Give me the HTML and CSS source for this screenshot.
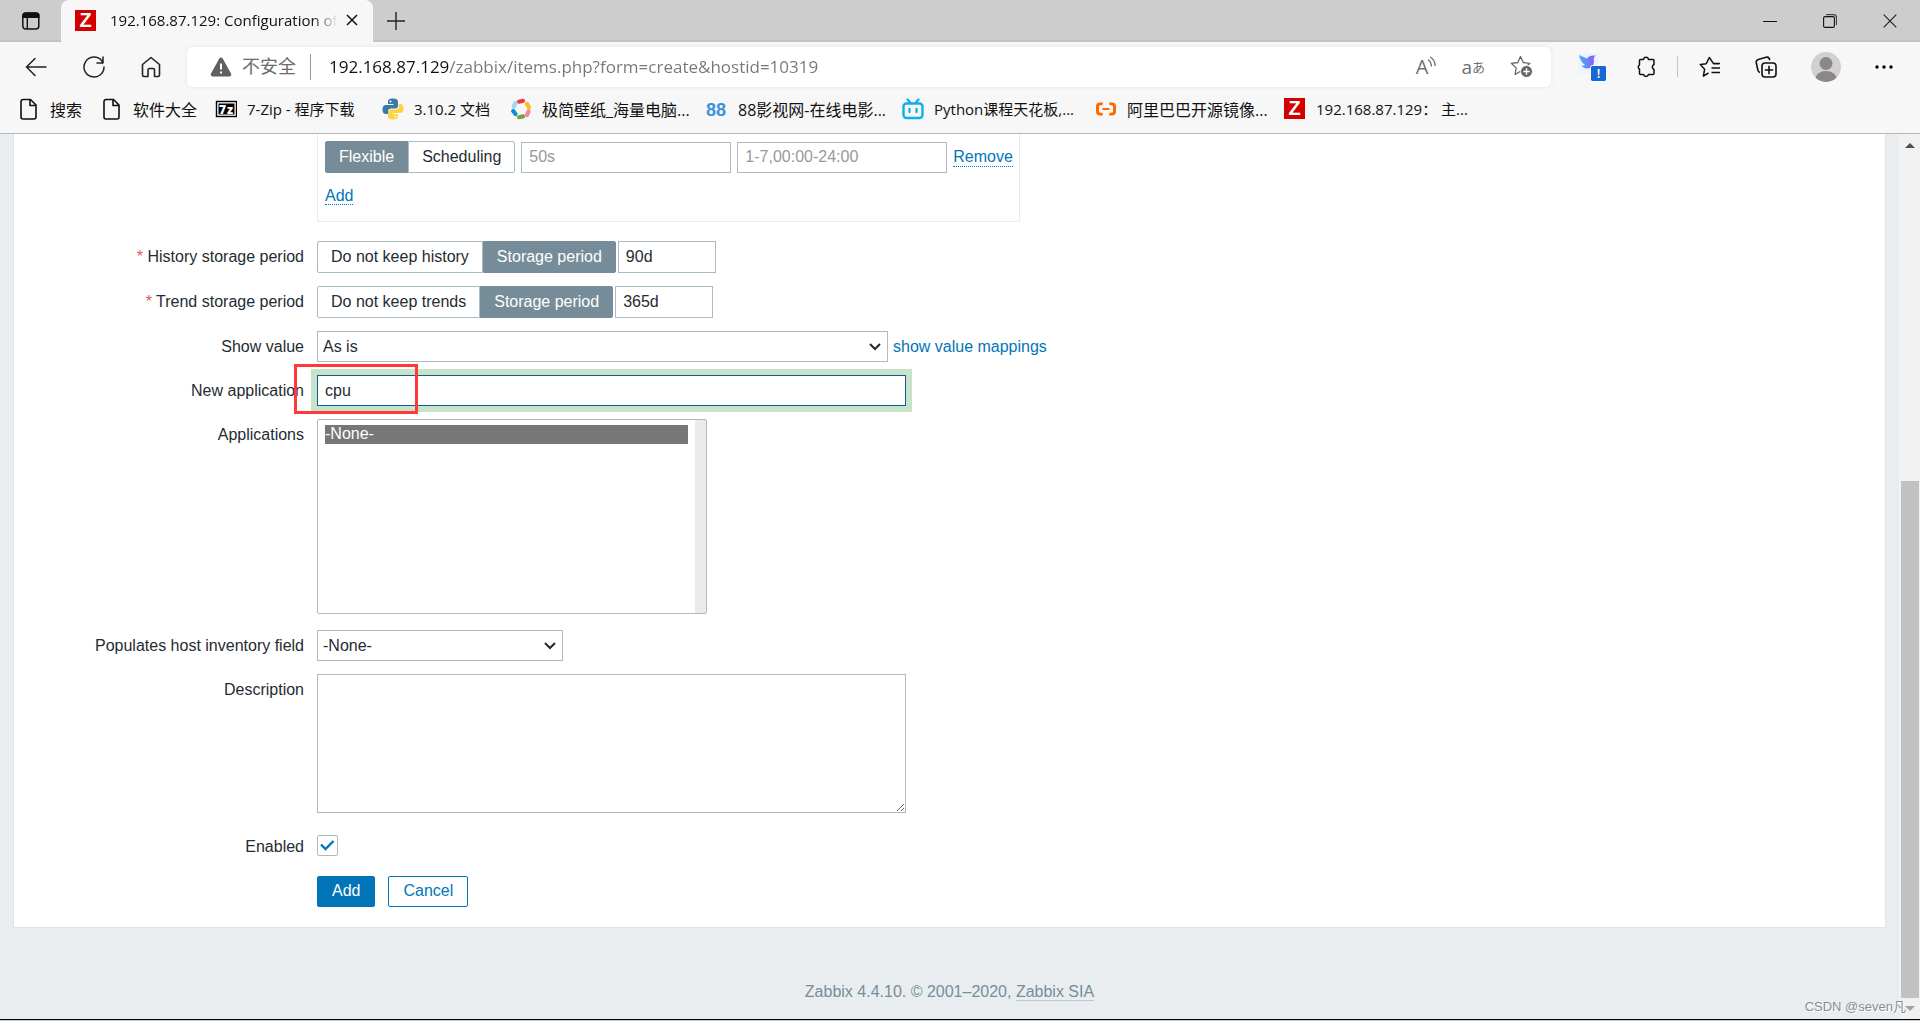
FILE: index.html
```html
<!DOCTYPE html>
<html lang="zh-CN">
<head>
<meta charset="utf-8">
<title>192.168.87.129: Configuration of items</title>
<link rel="stylesheet" href="styles.css">
</head>
<body>
<header class="browser">
  <div class="tabstrip">
    <button class="icon-btn tab-menu" aria-label="Tab actions">
      <svg width="20" height="20" viewBox="0 0 20 20"><rect x="1.8" y="2" width="16" height="16" rx="3" fill="none" stroke="#111" stroke-width="1.5"/><path d="M1.5 7V4.5A3 3 0 0 1 4.5 1.5h11a3 3 0 0 1 3 3V7z" fill="#111"/><path d="M6.3 7v11" stroke="#111" stroke-width="1.4"/></svg>
    </button>
    <div class="tab">
      <span class="favicon">Z</span>
      <span class="tab-title">192.168.87.129: Configuration of</span>
      <button class="icon-btn" aria-label="Close tab"><svg width="12" height="12" viewBox="0 0 12 12"><path d="M1 1l10 10M11 1L1 11" stroke="#111" stroke-width="1.5"/></svg></button>
    </div>
    <button class="icon-btn new-tab" aria-label="New tab"><svg width="20" height="20" viewBox="0 0 20 20"><path d="M10 1v18M1 10h18" stroke="#222" stroke-width="1.4"/></svg></button>
    <div class="window-controls">
      <button class="icon-btn" aria-label="Minimize"><svg width="14" height="14" viewBox="0 0 14 14"><path d="M0 7.5h14" stroke="#111"/></svg></button>
      <button class="icon-btn" aria-label="Restore"><svg width="14" height="14" viewBox="0 0 14 14"><rect x=".6" y="2.6" width="10.8" height="10.8" rx="1.5" fill="none" stroke="#111" stroke-width="1.1"/><path d="M3 .7h7.5a3 3 0 0 1 3 3V11" fill="none" stroke="#444" stroke-width="1.3"/></svg></button>
      <button class="icon-btn" aria-label="Close"><svg width="14" height="14" viewBox="0 0 14 14"><path d="M.7.7l12.6 12.6M13.3.7L.7 13.3" stroke="#222" stroke-width="1.2"/></svg></button>
    </div>
  </div>

  <div class="toolbar">
    <div class="nav">
      <button class="icon-btn" aria-label="Back"><svg width="22" height="20" viewBox="0 0 22 20"><path d="M10 1.5L1.5 10l8.500 8.500M2 10h19" fill="none" stroke="#222" stroke-width="1.5" stroke-linecap="round"/></svg></button>
      <button class="icon-btn" aria-label="Refresh"><svg width="22" height="22" viewBox="0 0 22 22"><path d="M21 11A10 10 0 1 1 18.600 4.500L19.500 6M20 1v6h-6" fill="none" stroke="#222" stroke-width="1.5" stroke-linecap="round" stroke-linejoin="round"/></svg></button>
      <button class="icon-btn" aria-label="Home"><svg width="20" height="22" viewBox="0 0 20 22"><path d="M1.500 8.500L10 1.500l8.500 7V19a1.500 1.500 0 0 1-1.500 1.500h-3.500V14a1.500 1.500 0 0 0-1.500-1.500H8.500A1.500 1.500 0 0 0 7 14v6.500H3A1.500 1.500 0 0 1 1.500 19z" fill="none" stroke="#222" stroke-width="1.600" stroke-linejoin="round"/></svg></button>
    </div>
    <div class="address">
      <svg width="22" height="20" viewBox="0 0 22 20"><path d="M9.300 1.400a2 2 0 0 1 3.400 0l8.300 15.200a2 2 0 0 1-1.700 3H2.700a2 2 0 0 1-1.700-3z" fill="#606060"/><path d="M11 6.500v6M11 14.500v2" stroke="#fff" stroke-width="2"/></svg>
      <span class="insecure">不安全</span>
      <input class="url" type="text" aria-label="Address" value="192.168.87.129/zabbix/items.php?form=create&amp;hostid=10319">
      <div class="address-actions">
        <button class="icon-btn read-aloud" aria-label="Read aloud">A<svg width="8" height="12" viewBox="0 0 8 12"><path d="M0 3.500q3.300 2.500 3.500 7M2.200.8Q7 4 7.200 10" fill="none" stroke="#707070" stroke-width="1.300"/></svg></button>
        <button class="icon-btn translate" aria-label="Translate">a<span>あ</span></button>
        <button class="icon-btn" aria-label="Add to favorites"><svg width="23" height="23" viewBox="0 0 23 23"><path d="M10.500 1.500l2.800 6 6.600.8-4.900 4.600 1 5.600-5.500-2.200-5.400 3.200 1.100-6.600L1.300 8.300l6.500-.8z" fill="none" stroke="#666" stroke-width="1.300" stroke-linejoin="round"/><circle cx="16.500" cy="16.500" r="6" fill="#666" stroke="#fff"/><path d="M16.500 13.300v6.400M13.300 16.500h6.400" stroke="#fff" stroke-width="1.400"/></svg></button>
      </div>
    </div>
    <div class="extensions">
      <button class="icon-btn" aria-label="Bird extension"><svg width="30" height="30" viewBox="0 0 30 30"><defs><linearGradient id="bird" x1="0" y1="0" x2="1" y2="0"><stop offset="0" stop-color="#45b1fa"/><stop offset="1" stop-color="#8a5cf0"/></linearGradient></defs><rect x="1" y="1" width="21" height="21" rx="2" fill="#f0f2ff"/><path d="M2 3l8 3.500Q12 3 18.500 3.500 16 6 17 9.500 17 16 10 16.500q-4 0-5.500-3 2 .5 3.500-.5-4.500-3-6-10z" fill="url(#bird)"/><rect x="13.500" y="13.500" width="16" height="16" rx="2" fill="#1967d2" stroke="#fff"/><text x="21.500" y="26" text-anchor="middle" font-family="Open Sans, sans-serif" font-size="13" font-weight="600" fill="#fff">!</text></svg></button>
      <button class="icon-btn" aria-label="Extensions"><svg width="20" height="22" viewBox="0 0 20 22"><path d="M4.500 3.500h3v-.3a2.600 2.600 0 0 1 5 0v.3H17a1 1 0 0 1 1 1V8.500a2.700 2.700 0 0 0 0 5v4a1 1 0 0 1-1 1h-4.500a2.600 2.600 0 0 1-5 0H4.500a1 1 0 0 1-1-1v-4.300a2.600 2.600 0 0 1 0-4.400V4.500a1 1 0 0 1 1-1z" fill="none" stroke="#111" stroke-width="1.500" stroke-linejoin="round"/></svg></button>
      <span class="divider"></span>
      <button class="icon-btn" aria-label="Favorites"><svg width="22" height="22" viewBox="0 0 22 22"><path d="M20 7.700h-5.500L10.300 1.500l-3 6.200-6 .9 4.300 4.700-1.200 6.900L9.500 17M12.500 12h8.500M12.500 16.500h8.500M14 7.500h7" fill="none" stroke="#111" stroke-width="1.500" stroke-linejoin="round"/></svg></button>
      <button class="icon-btn" aria-label="Collections"><svg width="22" height="22" viewBox="0 0 22 22"><rect x="7" y="7" width="14" height="14" rx="3" fill="none" stroke="#111" stroke-width="1.600"/><path d="M14 9.800v8.400M9.800 14h8.400M5 16.500a3 3 0 0 1-2-2L1.300 7a3 3 0 0 1 2-3.500L11 1.300a3 3 0 0 1 3.600 2.200l.2.700" fill="none" stroke="#111" stroke-width="1.600"/></svg></button>
      <button class="icon-btn" aria-label="Profile"><svg width="30" height="30" viewBox="0 0 30 30"><defs><clipPath id="face"><circle cx="15" cy="15" r="15"/></clipPath></defs><g clip-path="url(#face)"><rect width="30" height="30" fill="#d2d0ce"/><circle cx="15" cy="11.500" r="6.500" fill="#8a8886"/><ellipse cx="15" cy="27.500" rx="11" ry="8.500" fill="#8a8886"/></g></svg></button>
      <button class="icon-btn" aria-label="Settings and more"><svg width="18" height="4" viewBox="0 0 18 4"><circle cx="2" cy="2" r="1.700"/><circle cx="9" cy="2" r="1.700"/><circle cx="16" cy="2" r="1.700"/></svg></button>
    </div>
  </div>

  <nav class="bookmarks">
    <a href="#"><svg class="bm-icon" viewBox="0 0 22 22"><path d="M5 1.500h7.500L18 7v12a2 2 0 0 1-2 2H5a2 2 0 0 1-2-2V3.500a2 2 0 0 1 2-2zM12 1.500V7.500h6" fill="none" stroke="#111" stroke-width="1.600" stroke-linejoin="round"/></svg>搜索</a>
    <a href="#"><svg class="bm-icon" viewBox="0 0 22 22"><path d="M5 1.500h7.500L18 7v12a2 2 0 0 1-2 2H5a2 2 0 0 1-2-2V3.500a2 2 0 0 1 2-2zM12 1.500V7.500h6" fill="none" stroke="#111" stroke-width="1.600" stroke-linejoin="round"/></svg>软件大全</a>
    <a href="#" class="latin"><svg class="bm-icon" viewBox="0 0 22 22"><rect x="1.500" y="3.500" width="20" height="15" fill="#fff" stroke="#000" stroke-width="1.400"/><rect x="3.500" y="5.500" width="16" height="11"/><text x="4" y="16" font-family="Open Sans, sans-serif" font-size="12" font-weight="800" fill="#fff">7</text><text x="12" y="16" font-family="Open Sans, sans-serif" font-size="12" font-weight="800" fill="#fff">z</text></svg>7-Zip - 程序下载</a>
    <a href="#" class="latin"><svg class="bm-icon" viewBox="0 0 22 22"><path d="M11 .5c-4 0-5 1.500-5 3V6h5.500v1H4C1.500 7 .5 9 .5 11.500S1.500 16 3.500 16H6v-2.500C6 11.500 7.500 10.500 9 10.500h4.500c1.500 0 2.500-1.200 2.500-2.500V3.500c0-2-2-3-5-3z" fill="#3c78aa"/><path d="M11 21.500c4 0 5-1.500 5-3V16h-5.500v-1H18c2.500 0 3.500-2 3.500-4.500S20.500 6 18.500 6H17v2.500c0 2-1.500 3-3 3H9C7.500 11.500 6 12.500 6 14v4.500c0 2 2 3 5 3z" fill="#fdd43e"/><circle cx="8.500" cy="3.400" r="1" fill="#fff"/><circle cx="13.500" cy="18.600" r="1" fill="#fff"/></svg>3.10.2 文档</a>
    <a href="#"><svg class="bm-icon" viewBox="0 0 22 22"><g fill="none" stroke-width="4.200" stroke-linecap="round"><path d="M9 3.700l4-.9" stroke="#f23b36"/><path d="M17 6l2 3.500" stroke="#fdbb1e"/><path d="M18.500 13.500L17 17" stroke="#f7869a"/><path d="M9 19.200l4-.8" stroke="#6fa53a"/><path d="M3.200 13L5.500 16" stroke="#0f8ed8"/><path d="M5.500 5L3.800 8.500" stroke="#9ad8f5"/></g></svg>极简壁纸_海量电脑...</a>
    <a href="#"><span class="bm-icon bm-88">88</span>88影视网-在线电影...</a>
    <a href="#" class="latin"><svg class="bm-icon" viewBox="0 0 22 22"><rect x="1.500" y="5.500" width="19" height="14.500" rx="3" fill="none" stroke="#10aeea" stroke-width="2.400"/><path d="M5.500 1.500L8.500 5M16.500 1.500L13.500 5M7.500 11v3M14.500 11v3" stroke="#10aeea" stroke-width="2.300" stroke-linecap="round"/></svg>Python课程天花板,...</a>
    <a href="#"><svg class="bm-icon" viewBox="0 0 22 22"><path d="M8 4.500H5a4 4 0 0 0-4 4v5a4 4 0 0 0 4 4h3L7.500 15 5 14.500a1 1 0 0 1-1-1v-5a1 1 0 0 1 1-1L7.500 7zM14 4.500h3a4 4 0 0 1 4 4v5a4 4 0 0 1-4 4h-3l.5-2.500 2.500-.5a1 1 0 0 0 1-1v-5a1 1 0 0 0-1-1L14.500 7zM7.500 10h7v2h-7z" fill="#ff6a00"/></svg>阿里巴巴开源镜像...</a>
    <a href="#" class="latin"><span class="bm-icon"><span class="favicon">Z</span></span>192.168.87.129： 主...</a>
  </nav>
</header>

<div class="viewport">
  <div class="page">
    <main class="panel">
      <form class="form">
        <div class="row row-intervals">
          <span class="label"></span>
          <div class="intervals">
            <div class="field">
              <div class="segmented" role="group" aria-label="Interval type">
                <input type="radio" name="interval" id="flexible" checked><label for="flexible">Flexible</label>
                <input type="radio" name="interval" id="scheduling"><label for="scheduling">Scheduling</label>
              </div>
              <input class="text interval" type="text" placeholder="50s" aria-label="Interval">
              <input class="text interval" type="text" placeholder="1-7,00:00-24:00" aria-label="Period">
              <a class="dotted" href="#">Remove</a>
            </div>
            <a class="dotted" href="#">Add</a>
          </div>
        </div>
        <div class="row">
          <label class="label required" for="history">History storage period</label>
          <div class="field">
            <div class="segmented" role="group" aria-label="History storage">
              <input type="radio" name="history_mode" id="history-off"><label for="history-off">Do not keep history</label>
              <input type="radio" name="history_mode" id="history-on" checked><label for="history-on">Storage period</label>
            </div>
            <input class="text period" type="text" id="history" value="90d">
          </div>
        </div>
        <div class="row">
          <label class="label required" for="trends">Trend storage period</label>
          <div class="field">
            <div class="segmented" role="group" aria-label="Trend storage">
              <input type="radio" name="trends_mode" id="trends-off"><label for="trends-off">Do not keep trends</label>
              <input type="radio" name="trends_mode" id="trends-on" checked><label for="trends-on">Storage period</label>
            </div>
            <input class="text period" type="text" id="trends" value="365d">
          </div>
        </div>
        <div class="row">
          <label class="label" for="show-value">Show value</label>
          <div class="field">
            <select class="select select-wide" id="show-value"><option>As is</option></select>
            <a href="#">show value mappings</a>
          </div>
        </div>
        <div class="row">
          <label class="label" for="new-app">New application</label>
          <div class="field marked">
            <input class="text wide focused" type="text" id="new-app" value="cpu">
            <span class="marker"></span>
          </div>
        </div>
        <div class="row row-list">
          <label class="label" for="apps">Applications</label>
          <select class="listbox" id="apps" multiple><option selected>-None-</option></select>
        </div>
        <div class="row">
          <label class="label" for="inventory">Populates host inventory field</label>
          <select class="select select-narrow" id="inventory"><option>-None-</option></select>
        </div>
        <div class="row row-description">
          <label class="label" for="description">Description</label>
          <textarea class="text wide" id="description"></textarea>
        </div>
        <div class="row row-enabled">
          <label class="label" for="enabled">Enabled</label>
          <input class="checkbox" type="checkbox" id="enabled" checked>
        </div>
        <div class="row">
          <span class="label"></span>
          <div class="actions">
            <button class="btn primary" type="submit">Add</button>
            <button class="btn" type="button">Cancel</button>
          </div>
        </div>
      </form>
    </main>
    <footer class="footer">Zabbix 4.4.10. © 2001–2020, <a href="#">Zabbix SIA</a></footer>
  </div>
  <div class="scrollbar"><span class="arrow up"></span><span class="thumb"></span><span class="arrow down"></span></div>
  <span class="watermark">CSDN @seven凡</span>
</div>
</body>
</html>
```
FILE: styles.css
```css
* { box-sizing: border-box; }

body {
  margin: 0;
  min-height: 100vh;
  display: flex;
  flex-direction: column;
  border-bottom: 1px solid #c5d3dc;
  font-family: "Liberation Sans", Arial, "Noto Sans CJK SC", sans-serif;
  font-size: 16px;
  color: #1f2c33;
  background: #e9edf0;
}

button, input, select, textarea { font: inherit; color: inherit; }

a { color: #0275b8; text-decoration: none; }

/* Browser chrome */
.browser {
  font-family: "Open Sans", "Noto Sans CJK SC", sans-serif;
  color: #111;
  background: #f7f7f7;
  border-bottom: 1px solid #b8b8b8;
}

.icon-btn {
  display: flex;
  align-items: center;
  justify-content: center;
  padding: 0;
  border: 0;
  background: none;
}

.tabstrip {
  display: flex;
  align-items: stretch;
  height: 42px;
  background: #cdcdcd;
  box-shadow: inset 0 -2px #c2c2c2;
}

.tab-menu { width: 61px; }

.tab {
  display: flex;
  align-items: center;
  width: 312px;
  padding: 0 15px 2px 14px;
  border-radius: 8px 8px 0 0;
  background: #f7f7f7;
}

.favicon {
  display: block;
  width: 21px;
  height: 21px;
  flex: none;
  background: #d40000;
  color: #fff;
  font: bold 20px/21px "Liberation Sans", Arial, sans-serif;
  text-align: center;
}

.tab-title {
  flex: 1;
  margin: 0 4px 0 14px;
  overflow: hidden;
  font-size: 15px;
  white-space: nowrap;
  mask-image: linear-gradient(to right, #000 calc(100% - 30px), transparent calc(100% - 4px));
}

.new-tab { width: 46px; }

.window-controls {
  display: flex;
  gap: 46px;
  margin-left: auto;
  padding-right: 23px;
}

.toolbar {
  display: flex;
  align-items: center;
  height: 49px;
}

.nav {
  display: flex;
  gap: 36px;
  width: 187px;
  padding-left: 25px;
}

.address {
  display: flex;
  flex: 1;
  align-items: center;
  height: 40px;
  padding: 0 18px 0 23px;
  border-radius: 6px;
  background: #fff;
  box-shadow: 0 0 4px #e4e4e4;
}

.insecure {
  margin: 0 14px 0 10px;
  font-size: 18px;
  line-height: 24px;
  padding-bottom: 2px;
  color: #6b6b6b;
}

.url {
  flex: 1;
  min-width: 0;
  height: 26px;
  padding: 0 0 0 18px;
  border: 0;
  border-left: 1px solid #999;
  outline: 0;
  font-size: 17px;
  color: transparent;
  background: linear-gradient(to right, #111 138px, #767676 138px) text;
}

.address-actions {
  display: flex;
  align-items: center;
  gap: 25px;
}

.read-aloud { color: #707070; font-size: 20px; line-height: 22px; }
.read-aloud svg { align-self: flex-start; }
.translate { color: #707070; font-size: 19px; line-height: 22px; }
.translate span { font-size: 13px; }

.extensions {
  display: flex;
  align-items: center;
  gap: 29px;
  padding: 0 27px 0 26px;
}

.extensions .icon-btn:nth-child(n + 5) { margin-left: 5px; }

.divider {
  width: 1px;
  height: 21px;
  margin: 0 -8px;
  background: #c4c4c4;
}

.bookmarks {
  display: grid;
  grid-template-columns: 83px 114px 167px 128px 196px 196px 193px 189px auto;
  height: 42px;
  padding: 0 18px;
}

.bookmarks a {
  display: flex;
  align-items: center;
  gap: 10px;
  height: 35px;
  color: #111;
  font-size: 16px;
  white-space: nowrap;
}

.bookmarks .latin { font-size: 15px; }

.bm-icon { width: 22px; height: 22px; flex: none; }

.bm-88 {
  font: bold 18px/24px "Liberation Sans", Arial, sans-serif;
  color: #3b92dc;
}

/* Page viewport */
.viewport {
  position: relative;
  display: flex;
  flex: 1;
  border-bottom: 1px solid #000;
}

.page { flex: 1; min-width: 0; }

.panel {
  margin: 0 13px;
  padding: 7px 0 20px;
  border: 1px solid #dfe4e7;
  border-top: 0;
  background: #fff;
}

.form {
  display: flex;
  flex-direction: column;
  gap: 13px;
}

.row {
  display: grid;
  grid-template-columns: 290px 1fr;
  column-gap: 13px;
  align-items: start;
}

.row-list { padding-bottom: 3px; }
.row-description { padding-bottom: 9px; }
.row-enabled { padding-bottom: 4px; }
.row-enabled .label { line-height: 24px; }
.row-intervals { margin-top: -7px; padding-bottom: 6px; }

.label { text-align: right; line-height: 31px; }

.required::before { content: "* "; color: #e45959; }

.field { display: flex; align-items: center; }

.intervals {
  width: 703px;
  height: 88px;
  padding: 7px;
  border: 1px solid #ebebeb;
  border-top: 0;
}

.intervals .field { gap: 6px; margin-bottom: 14px; }

.dotted { border-bottom: 1px dotted #0275b8; }

.segmented { display: flex; }

.segmented input { position: absolute; opacity: 0; }

.segmented label {
  height: 32px;
  padding: 0 13px;
  border: 1px solid #acbbc2;
  border-radius: 2px 0 0 2px;
  line-height: 30px;
}

.segmented label:last-child { border-radius: 0 2px 2px 0; }

.segmented input:checked + label {
  border-color: #768d99;
  background: #768d99;
  color: #fff;
}

.text {
  height: 31px;
  padding: 0 7px;
  border: 1px solid #acbbc2;
  border-radius: 0;
  outline: 0;
  background: #fff;
}

.text::placeholder { color: #999; opacity: 1; }

.interval { width: 210px; }
.period { width: 98px; height: 32px; margin-left: 2px; }
.wide { width: 589px; }

textarea.text { height: 139px; padding: 5px; }

.focused {
  border-color: #0c5f92;
  box-shadow: 0 0 0 6px #c7e3c9;
}

.select {
  height: 31px;
  padding: 0 26px 0 5px;
  border: 1px solid #acbbc2;
  border-radius: 0;
  appearance: none;
  background: #fff url("data:image/svg+xml,%3Csvg xmlns='http://www.w3.org/2000/svg' width='12' height='8'%3E%3Cpath d='M1 1l5 5 5-5' fill='none' stroke='%231f2c33' stroke-width='2'/%3E%3C/svg%3E") no-repeat right 6px center;
}

.select-wide { width: 571px; margin-right: 5px; }
.select-narrow { width: 246px; }

.marked { position: relative; }

.marker {
  position: absolute;
  left: -23px;
  top: -11px;
  width: 124px;
  height: 50px;
  border: 3px solid #ff3838;
}

.listbox {
  width: 390px;
  height: 195px;
  padding: 5px 18px 5px 7px;
  border: 1px solid #acbbc2;
  border-radius: 2px;
  outline: 0;
  overflow: hidden;
  background: linear-gradient(to left, #ebebeb 11px, #fff 11px);
}

.listbox option { padding: 0; line-height: 19px; }

.listbox option:checked {
  color: #fff;
  background: linear-gradient(#777, #777);
}

.checkbox {
  width: 21px;
  height: 21px;
  margin: 0;
  border: 1px solid #acbbc2;
  border-radius: 2px;
  appearance: none;
  background: #fff;
}

.checkbox:checked {
  background: #fff url("data:image/svg+xml,%3Csvg xmlns='http://www.w3.org/2000/svg' width='15' height='11'%3E%3Cpath d='M1 4.500l4.500 4.500 8-8' fill='none' stroke='%230275b8' stroke-width='2.400'/%3E%3C/svg%3E") no-repeat center;
}

.actions { display: flex; gap: 13px; }

.btn {
  height: 31px;
  padding: 0 14px 2px;
  border: 1px solid #0275b8;
  border-radius: 2px;
  background: #fff;
  color: #0275b8;
}

.btn.primary { background: #0275b8; color: #fff; }

.footer {
  padding: 55px 0 18px;
  text-align: center;
  color: #768d99;
}

.footer a { color: inherit; border-bottom: 1px solid #c0c8cc; }

.scrollbar {
  display: flex;
  flex-direction: column;
  align-items: center;
  width: 21px;
  padding: 9px 1px 8px 2px;
  background: #f1f1f1;
}

.arrow {
  border: 5px solid transparent;
  border-top: 0;
  border-bottom-color: #505050;
}

.arrow.down {
  border-top: 5px solid #a3a3a3;
  border-bottom: 0;
}

.thumb {
  flex: 1;
  width: 100%;
  margin: 333px 0 8px;
  background: #c1c1c1;
}

.watermark {
  position: absolute;
  right: 14px;
  bottom: 4px;
  font-size: 13px;
  color: #8a8d90;
  text-shadow: 1px 1px #fff;
}
```
